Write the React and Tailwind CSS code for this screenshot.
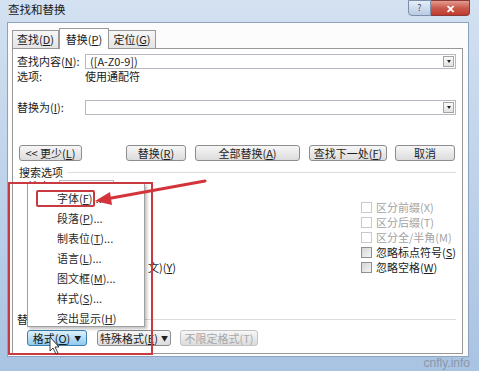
import React from 'react'

const font = { fontFamily: '"Noto Sans CJK SC", "Noto Sans", sans-serif' }

function U({ children }) {
  return <span className="underline underline-offset-1">{children}</span>
}

function Btn({ children, className = '', disabled }) {
  return (
    <div
      className={`h-[16px] flex items-center justify-center rounded-[3px] border border-[#8d8d8d] bg-linear-to-b from-[#f7f7f7] to-[#dcdcdc] text-[11px] leading-none whitespace-nowrap ${
        disabled ? 'text-[#a8a8a8] border-[#c4c4c4]' : 'text-[#1e1e1e]'
      } ${className}`}
    >
      {children}
    </div>
  )
}

function Combo({ value }) {
  return (
    <div className="flex-1 h-[15px] border border-[#b6b9c1] bg-white flex items-center pl-[4px] pr-[1px] text-[11px] leading-none">
      <span className="flex-1">{value}</span>
      <div className="w-[11px] h-[11px] border border-[#a5a5a5] bg-linear-to-b from-[#fafafa] to-[#e2e2e2] flex items-center justify-center">
        <div className="w-0 h-0 border-l-[2.5px] border-r-[2.5px] border-t-[3px] border-l-transparent border-r-transparent border-t-[#222]" />
      </div>
    </div>
  )
}

function Check({ label, disabled }) {
  return (
    <div className="h-[15px] flex items-center gap-[4px]">
      <div
        className={`w-[11px] h-[11px] border ${
          disabled ? 'border-[#c9c9c9] bg-white' : 'border-[#8f8f8f] bg-linear-to-br from-[#d6d6d6] to-[#f4f4f4]'
        }`}
      />
      <span className={`text-[11px] leading-none ${disabled ? 'text-[#a3a3a3]' : 'text-[#1a1a1a]'}`}>{label}</span>
    </div>
  )
}

const menuItems = [
  ['字体(', 'F', ')...'],
  ['段落(', 'P', ')...'],
  ['制表位(', 'T', ')...'],
  ['语言(', 'L', ')...'],
  ['图文框(', 'M', ')...'],
  ['样式(', 'S', ')...'],
  ['突出显示(', 'H', ')'],
]

export default function App() {
  return (
    <div style={font} className="relative w-[479px] h-[371px] overflow-hidden bg-linear-to-b from-[#d3e1f1] to-[#a9c3e3] text-[#1a1a1a]">
      {/* title bar */}
      <div className="h-[22px] flex items-start">
        <span className="pl-[8px] pt-[4px] text-[11.5px] leading-none text-[#1a1a1a]">查找和替换</span>
        <div className="ml-auto mr-[9px] flex">
          <div className="w-[23px] h-[16px] rounded-bl-[4px] border border-[#7d8fa8] bg-linear-to-b from-[#e6eef8] to-[#b9cbe2] flex items-center justify-center text-[9px] text-[#3d4f66]">?</div>
          <div className="w-[39px] h-[16px] rounded-br-[4px] border border-l-0 border-[#8b3a3a] bg-linear-to-b from-[#e59a8f] via-[#c85a4d] to-[#c0392b] flex items-center justify-center text-[11px] font-bold text-white">✕</div>
        </div>
      </div>

      {/* client area */}
      <div className="ml-[7px] w-[462px] h-[335px] bg-[#fcfcfc] border border-[#8da2bd] flex flex-col pl-[4px]">
        {/* tabs */}
        <div className="mt-[4px] h-[21px] flex items-end">
          <div className="w-[47px] h-[18px] border border-b-0 border-[#999] bg-linear-to-b from-[#f6f6f6] to-[#e4e4e4] flex items-center justify-center text-[11px] leading-none">查找(<U>D</U>)</div>
          <div className="w-[50px] h-[21px] -mb-[1px] border border-b-0 border-[#999] bg-white flex items-center justify-center text-[11px] leading-none z-10">替换(<U>P</U>)</div>
          <div className="w-[47px] h-[18px] border border-b-0 border-l-0 border-[#999] bg-linear-to-b from-[#f6f6f6] to-[#e4e4e4] flex items-center justify-center text-[11px] leading-none">定位(<U>G</U>)</div>
        </div>

        {/* tab panel */}
        <div className="w-[451px] h-[306px] border border-[#999] bg-white flex flex-col pl-[4px] pr-[6px]">
          <div className="mt-[5px] flex items-center">
            <span className="w-[68px] text-[11px] leading-none">查找内容(<U>N</U>):</span>
            <Combo value="([A-Z0-9])" />
          </div>
          <div className="h-[14px] flex items-center">
            <span className="w-[68px] text-[11px] leading-none">选项:</span>
            <span className="text-[11px] leading-none">使用通配符</span>
          </div>
          <div className="mt-[17px] flex items-center">
            <span className="w-[68px] text-[11px] leading-none">替换为(<U>I</U>):</span>
            <Combo value="" />
          </div>

          <div className="mt-[30px] flex">
            <Btn className="ml-[2px] w-[63px]">&lt;&lt; 更少(<U>L</U>)</Btn>
            <Btn className="ml-[44px] w-[60px]">替换(<U>R</U>)</Btn>
            <Btn className="ml-[9px] w-[105px]">全部替换(<U>A</U>)</Btn>
            <Btn className="ml-[9px] w-[78px]">查找下一处(<U>F</U>)</Btn>
            <Btn className="ml-[8px] w-[60px]">取消</Btn>
          </div>

          <div className="mt-[4px] h-[14px] flex items-center">
            <span className="ml-[2px] text-[11px] leading-none">搜索选项</span>
            <div className="flex-1 h-px bg-[#dcdcdc] ml-[4px]" />
          </div>
          <div className="h-[14px] flex items-center pl-[11px] gap-[6px]">
            <span className="text-[11px] leading-none">搜索:</span>
            <div className="w-[55px] h-[12px] border border-[#b6b9c1]" />
          </div>

          <div className="mt-[7px] flex">
            <div className="w-[159px] flex flex-col">
              <div className="h-[60px]" />
              <div className="h-[15px] flex justify-end items-center overflow-hidden whitespace-nowrap text-[11px] leading-none">
                文)(<U>Y</U>)
              </div>
            </div>
            <div className="ml-[185px] flex flex-col">
              <Check disabled label="区分前缀(X)" />
              <Check disabled label="区分后缀(T)" />
              <Check disabled label="区分全/半角(M)" />
              <Check label={<>忽略标点符号(<U>S</U>)</>} />
              <Check label={<>忽略空格(<U>W</U>)</>} />
            </div>
          </div>

          <div className="mt-[37px] h-[14px] flex items-center">
            <span className="text-[11px] leading-none">替</span>
            <div className="flex-1 h-px bg-[#dcdcdc] ml-[26px]" />
          </div>
          <div className="mt-[4px] flex">
            <div className="ml-[10px] w-[60px] h-[16px] rounded-[3px] border border-[#3c7fb1] bg-linear-to-b from-[#dff1fc] to-[#8fcaee] flex items-center justify-center text-[11px] leading-none">
              格式(<U>O</U>) <span className="ml-[4px] text-[7px]">▼</span>
            </div>
            <Btn className="ml-[10px] w-[74px]">特殊格式(<U>E</U>) <span className="ml-[3px] text-[7px]">▼</span></Btn>
            <Btn disabled className="ml-[9px] w-[78px]">不限定格式(T)</Btn>
          </div>
        </div>
      </div>

      {/* dropdown menu */}
      <div className="absolute left-[27px] top-[183px] w-[118px] h-[144px] bg-white border border-[#a0a0a0] shadow-[2px_2px_3px_rgba(0,0,0,0.25)] pt-[4px]">
        {menuItems.map(([a, k, b]) => (
          <div key={k} className="h-[20px] flex items-center pl-[29px] text-[11px] leading-none text-[#2a2a2a]">
            {a}<U>{k}</U>{b}
          </div>
        ))}
      </div>

      {/* annotations */}
      <div className="absolute left-[8px] top-[182px] w-[145px] h-[173px] border-2 border-[#c83a40]" />
      <div className="absolute left-[36px] top-[190px] w-[59px] h-[17px] border-2 border-[#c83a40] rounded-[2px]" />
      <svg className="absolute left-0 top-0" width="479" height="371">
        <line x1="205" y1="181" x2="106" y2="199" stroke="#d3343c" strokeWidth="3" strokeLinecap="round" />
        <polygon points="95,201 110,192 112,205" fill="#d3343c" />
        <path d="M50 337 L50 351 L53 348 L56 354 L58 353 L55 347 L59 347 Z" fill="#fff" stroke="#111" strokeWidth="0.8" strokeLinejoin="round" />
      </svg>

      <div className="absolute right-[9px] bottom-[2px] text-[12px] leading-none text-[#8b96a6]" style={{ fontFamily: '"Liberation Sans", Arial, sans-serif' }}>
        cnfly.info
      </div>
    </div>
  )
}
